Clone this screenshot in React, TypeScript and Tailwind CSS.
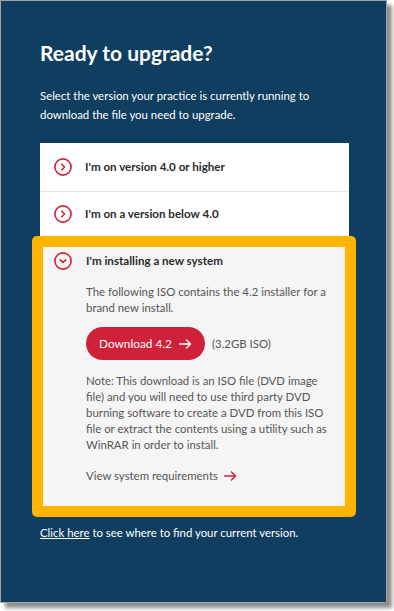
import React from "react";

function CircleChevron({ down }: { down?: boolean }) {
  return (
    <svg width="18" height="18" viewBox="0 0 18 18" className="shrink-0">
      <circle cx="9" cy="9" r="8.1" fill="none" stroke="#d0213a" strokeWidth="1.6" />
      {down ? (
        <path d="M6.2 7.8 L9 10.5 L11.8 7.8" fill="none" stroke="#d0213a" strokeWidth="1.6" strokeLinecap="round" strokeLinejoin="round" />
      ) : (
        <path d="M7.8 6.2 L10.5 9 L7.8 11.8" fill="none" stroke="#d0213a" strokeWidth="1.6" strokeLinecap="round" strokeLinejoin="round" />
      )}
    </svg>
  );
}

function Arrow({ color, w = 13 }: { color: string; w?: number }) {
  return (
    <svg width={w} height="10" viewBox="0 0 13 10" className="shrink-0">
      <path d="M0.5 5 H11.5 M7.5 1 L11.5 5 L7.5 9" fill="none" stroke={color} strokeWidth="1.5" strokeLinecap="round" strokeLinejoin="round" />
    </svg>
  );
}

export default function App() {
  return (
    <div className="w-[394px] h-[611px] bg-white" style={{ fontFamily: "Lato, 'Noto Sans', sans-serif" }}>
      <div className="w-[387px] h-[603px] bg-[#0f3e60] border border-[#a3a3a3] shadow-[5px_5px_4px_rgba(0,0,0,0.45)] pl-[39px] pt-[40px]">
        <h1 className="text-[21px] leading-[24px] font-bold text-white">Ready to upgrade?</h1>
        <p className="mt-[21px] text-[11.4px] leading-[19px] text-white w-[300px]">
          Select the version your practice is currently running to download the file you need to upgrade.
        </p>
        <div className="mt-[19px] w-[309px] bg-white">
          <div className="h-[49px] border-b border-[#e5e5e5] flex items-center pl-[14px] gap-[13px]">
            <CircleChevron />
            <span className="text-[11.6px] font-bold text-[#2b2b2b]">I'm on version 4.0 or higher</span>
          </div>
          <div className="h-[44px] flex items-center pl-[14px] gap-[13px]">
            <CircleChevron />
            <span className="text-[11.6px] font-bold text-[#2b2b2b]">I'm on a version below 4.0</span>
          </div>
        </div>
        <div className="-ml-[8px] w-[324px] border-[11px] border-[#ffb400] rounded-[5px] bg-[#f5f5f5]">
          <div className="h-[28px] flex items-center pl-[11px] gap-[14px]">
            <CircleChevron down />
            <span className="text-[11.6px] font-bold text-[#2b2b2b]">I'm installing a new system</span>
          </div>
          <div className="pl-[43px] pr-[16px] pb-[22px] text-[11.4px] leading-[16px] text-[#555555]">
            <p className="mt-[9px]">The following ISO contains the 4.2 installer for a brand new install.</p>
            <div className="mt-[11px] flex items-center gap-[7px]">
              <div className="h-[33px] w-[119px] rounded-full bg-[#d0213a] flex items-center justify-center gap-[7px] text-white text-[11.8px]">
                <span>Download 4.2</span>
                <Arrow color="#ffffff" />
              </div>
              <span>(3.2GB ISO)</span>
            </div>
            <p className="mt-[13px]">
              Note: This download is an ISO file (DVD image file) and you will need to use third party DVD burning software to create a DVD from this ISO file or extract the contents using a utility such as WinRAR in order to install.
            </p>
            <div className="mt-[15px] flex items-center gap-[6px]">
              <span>View system requirements</span>
              <Arrow color="#d0213a" />
            </div>
          </div>
        </div>
        <p className="mt-[8px] text-[11.4px] leading-[16px] text-white">
          <span className="underline">Click here</span> to see where to find your current version.
        </p>
      </div>
    </div>
  );
}
